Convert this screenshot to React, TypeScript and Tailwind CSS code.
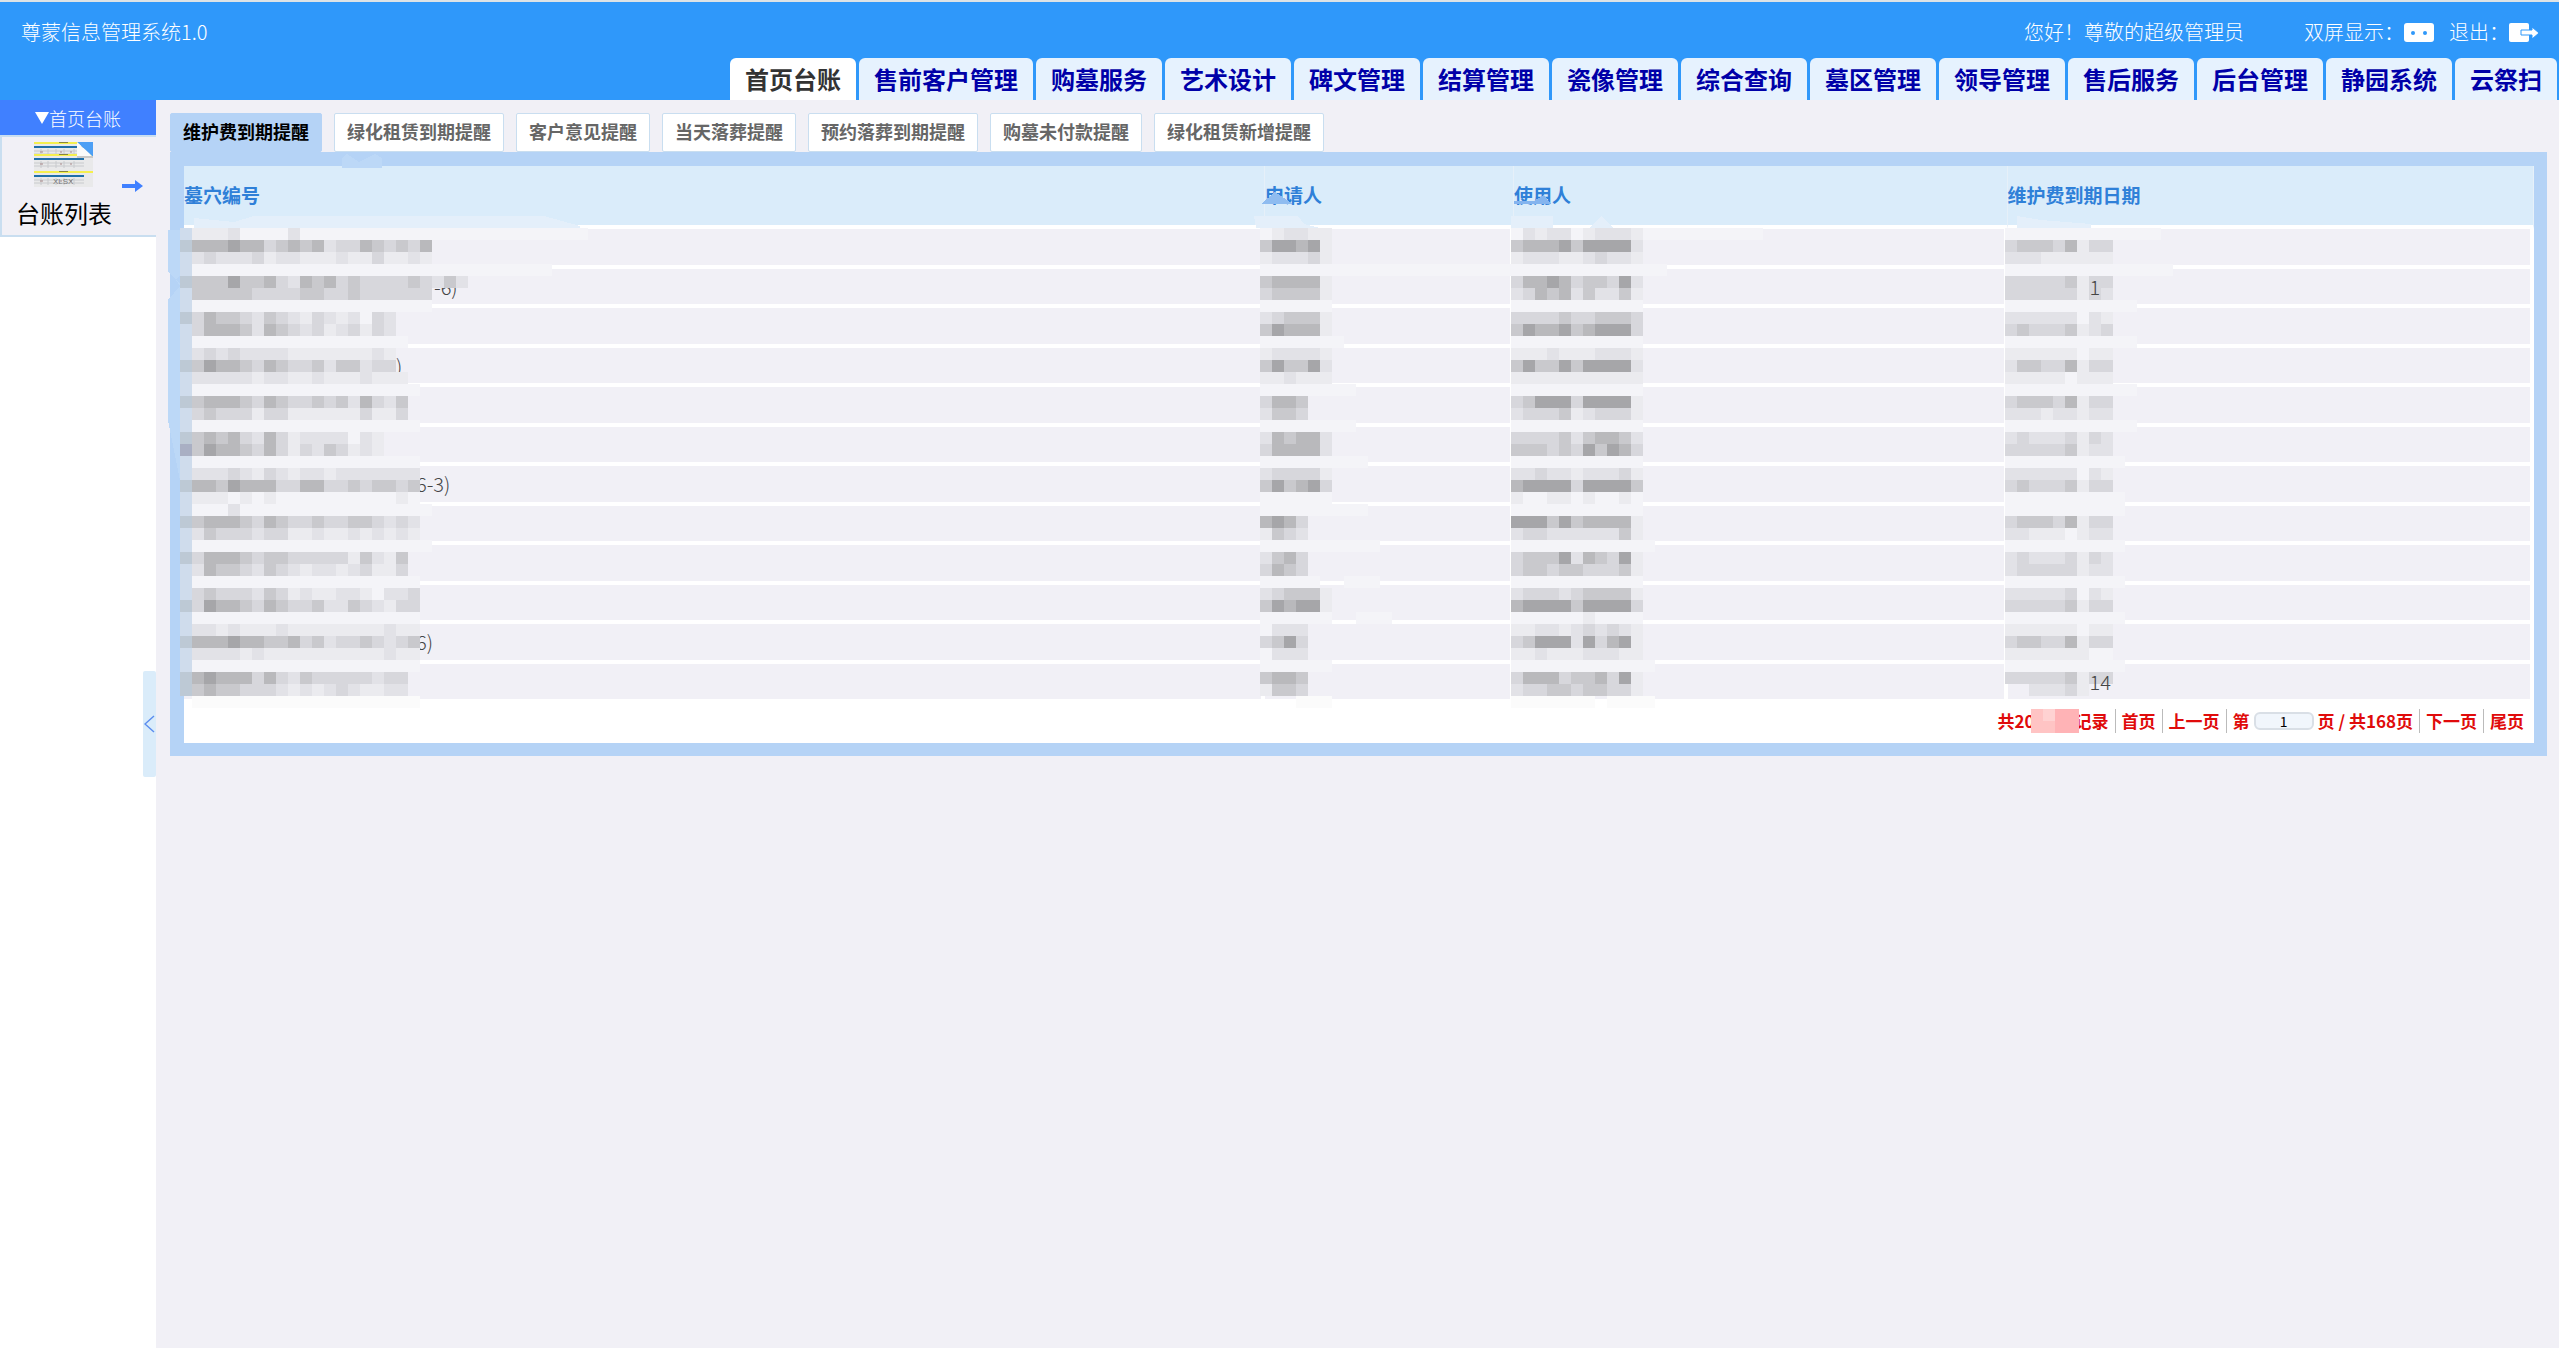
import type { ReactNode } from "react";

const navItems = [
  "首页台账", "售前客户管理", "购墓服务", "艺术设计", "碑文管理", "结算管理", "瓷像管理",
  "综合查询", "墓区管理", "领导管理", "售后服务", "后台管理", "静园系统", "云祭扫",
];

const reminderTabs = [
  "维护费到期提醒", "绿化租赁到期提醒", "客户意见提醒", "当天落葬提醒",
  "预约落葬到期提醒", "购墓未付款提醒", "绿化租赁新增提醒",
];

const columns = ["墓穴编号", "申请人", "使用人", "维护费到期日期"];

// what is left readable of each masked record
const rows = [
  { code: "", codePad: "", date: "", datePad: "" },
  { code: "-6)", codePad: "pl-[250px]", date: "1", datePad: "pl-[82px]" },
  { code: "", codePad: "", date: "", datePad: "" },
  { code: ")", codePad: "pl-[212px]", date: "", datePad: "" },
  { code: "", codePad: "", date: "", datePad: "" },
  { code: "", codePad: "", date: "", datePad: "" },
  { code: "6-3)", codePad: "pl-[232px]", date: "", datePad: "" },
  { code: "", codePad: "", date: "", datePad: "" },
  { code: "", codePad: "", date: "", datePad: "" },
  { code: "", codePad: "", date: "", datePad: "" },
  { code: "6)", codePad: "pl-[232px]", date: "", datePad: "" },
  { code: "", codePad: "", date: "14", datePad: "pl-[82px]" },
];

const shades: Record<string, string> = {
  p: "#f4f4f8",
  w: "#fbfbfb",
  "1": "#ebebef",
  "2": "#e2e2e7",
  "3": "#d7d7dc",
  "4": "#c9c9cd",
  "5": "#b9b9bc",
  "6": "#a6a6a9",
  b: "#cfdcec",
  c: "#bdc9d5",
  d: "#a9afc3",
  x: "#ffc4c4",
  y: "#ffd2d2",
  z: "#ffb3b6",
};

// one string per 12px line, one character per 12px cell
const codeMask = [
  "b1112pppp2pppppppppppppppppppppppp",
  "c55565534545233543435",
  "b23222312211121131121",
  "bpppppppppppppppppppppppppppppp",
  "c44464453254534333343242",
  "b44444333344334333333",
  "bpppppppppppppppppppp",
  "c35443243213212p32",
  "b35554254323123132",
  "bpppppppppppppppppp",
  "b23232222111111121",
  "c46554354334244233",
  "b222221221121112111",
  "bppppppppppppppppppp",
  "c455543543343425324",
  "b343331331111113113",
  "bppppppppppppppppppp",
  "c4545325312222p21",
  "d4655435313243121",
  "bppppppppppppppppppp",
  "b2223213212212222222",
  "c5546555335533434434",
  "b111p1p1pppppppppp1p",
  "bppp2pppppppppppppppp",
  "c4555435433433443232",
  "b2433323311211212121",
  "bpppppppppppppppppppp",
  "c355543443333314214",
  "b254432432122123113",
  "bppppppppppppppppppp",
  "b343332431211221p223",
  "c3655435433422432133",
  "bppppppppppppppppppp",
  "b2212111211111111211",
  "c5556554453423343234",
  "b2222121111111111211",
  "bppppppppppppppppppp",
  "c565553532433333233",
  "c454433321212321122",
  " wwwwwwwwwwwwwwwwwww",
];

const applicantMask = [
  "p12211", "466561", "122231", "ppppppppppppppppppppp", "455551", "344441", "pppppp",
  "234441", "465551", "ppppppp", "122221", "464462", "112111", "pppppppp", "3554", "2443",
  "pppppppp", "254552", "355552", "ppppppppp", "233331", "464563", "pppppp", "ppppppppp",
  "5653", "1432", "pppppppppp", "2453", "3543", "ppppp  ppp", "234441", "465661", "pppppp  ppp",
  "p222", "3463", "p222", "pppppp", "4554", "1443", "   www",
];

const userMask = [
  "p2122p12221pppppppppp", "45556466662", "12221123221", "ppppppppppppp", "35565344362", "23545242241",
  "ppppppppppp", "33334334443", "46556456663", "ppppppppppp", "11121112221", "46446466662",
  "11111111111", "ppppppppppp", "34666366661", "23334123331", "ppppppppppp", "33334245542",
  "44434364653", "ppppppppppp", "22322122231", "56666366664", "1pp11p1pp1p", "ppppppppppp",
  "66646455551", "23322222241", "pppppppppppp", "34446254361", "34434433341", "ppppppppppp",
  "23332344441", "56666466663", "pppppp1pppp", "11221232321", "34666263561", "11211122211",
  "pppppppppppp", "35553445361", "23344344331", "wwwwwww wwww",
];

const dateMask = [
  "ppppppppppppp", "344435133", "222111111", "pppppppppppppp", "333334133", "333333132", "ppppppppppp",
  "222222p21", "343334123", "ppppppppppp", "111111p11", "244335133", "11111p111", "ppppppppppp",
  "344435133", "222122122", "ppppppppppp", "232223132", "333334122", "pppppppppp", "222222p21",
  "343334133", "pppppppppp", "pppppppppp", "344435133", "22111p122", "pppppppppp", "232223132",
  "233333122", "pppppppppp", "222223p21", "333334133", "pppppppppp", "111111p11", "344335133",
  "1111111pp", "pppppppppp", "333334133", "  22231",
];

function Mosaic({ lines, className, children }: { lines: string[]; className: string; children?: ReactNode }) {
  const cells = Math.max(...lines.map((line) => line.length));
  return (
    <svg
      className={className}
      width={cells * 12}
      height={lines.length * 12}
      shapeRendering="crispEdges"
      aria-hidden="true"
    >
      {children}
      {lines.map((line, y) =>
        [...line].map((cell, x) =>
          shades[cell] ? (
            <rect key={`${x}-${y}`} x={x * 12} y={y * 12} width="12" height="12" fill={shades[cell]} />
          ) : null
        )
      )}
    </svg>
  );
}

function SheetIcon() {
  return (
    <svg width="59" height="45" viewBox="0 0 59 45" aria-hidden="true">
      <rect width="59" height="45" fill="#e9e9ea" />
      {[1, 13, 30].map((y) => (
        <g key={y}>
          <rect y={y - 1} width="59" height="2" fill="#f5ef4e" />
          <rect x="25" y={y - 1} width="9" height="1" fill="#8a8738" />
          <rect y={y + 3} width="50" height="2" fill="#1f6fa8" />
          <path d={`M0 ${y + 8}H50M0 ${y + 11}H50M7 ${y + 6}v7M14 ${y + 6}v7M22 ${y + 6}v7M30 ${y + 6}v7M40 ${y + 6}v7`} stroke="#c8cacd" strokeWidth="1" />
          <path d={`M6 ${y + 9}h3M26 ${y + 9}h2M36 ${y + 9}h2`} stroke="#a98888" strokeWidth="1" />
        </g>
      ))}
      <path d="M43 0h16v15z" fill="#4d9ff5" />
      <path d="M43 0v15h16z" fill="#fafafa" />
      <path d="M43 15h16" stroke="#c9c9c9" strokeWidth="2" />
      <text x="19" y="42" fontSize="8" fill="#777" fontFamily="Liberation Sans, sans-serif">XLSX</text>
    </svg>
  );
}

function Header() {
  return (
    <header className="flex h-[100px] flex-col justify-between border-t-2 border-[#dde3e6] bg-[#2f98fa] text-white">
      <div className="flex items-center justify-between pt-[14px] pr-5 pl-[21px] text-xl leading-8 font-light">
        <h1>尊蒙信息管理系统1.0</h1>
        <div className="flex items-center">
          <span className="mr-[60px]">您好！尊敬的超级管理员</span>
          <button type="button" className="mr-[15px] flex items-center" aria-label="双屏显示">
            <span>双屏显示：</span>
            <svg width="30" height="19" viewBox="0 0 30 19" aria-hidden="true">
              <rect width="30" height="19" rx="3" fill="#fff" />
              <circle cx="9" cy="10" r="2" fill="#2f98fa" />
              <circle cx="21" cy="10" r="2" fill="#2f98fa" />
            </svg>
          </button>
          <button type="button" className="flex items-center" aria-label="退出">
            <span>退出：</span>
            <svg width="30" height="19" viewBox="0 0 30 19" aria-hidden="true">
              <rect width="20" height="19" rx="2" fill="#fff" />
              <path d="M12 7h11V4l7 6-7 6v-4H12z" fill="#fff" stroke="#2f98fa" strokeWidth="1" />
            </svg>
          </button>
        </div>
      </div>
      <nav className="flex justify-end gap-[3px] pr-[2px] text-2xl font-semibold">
        {navItems.map((item, i) => (
          <a
            key={item}
            href="#"
            className={`flex h-[42px] items-center rounded-t-md px-[15px] pb-px whitespace-nowrap ${i === 0 ? "bg-white text-[#333]" : "bg-[#e6f2fe] text-[#0000a8]"}`}
          >
            {item}
          </a>
        ))}
      </nav>
    </header>
  );
}

function Sidebar() {
  return (
    <aside className="relative w-[156px] shrink-0 bg-white">
      <button type="button" className="flex h-[35px] w-full items-center justify-center bg-[#4080ff] text-lg font-light text-white">
        <svg width="14" height="12" viewBox="0 0 14 12" aria-hidden="true">
          <path d="M0 0h14L7 12z" fill="#fff" />
        </svg>
        首页台账
      </button>
      <a href="#" className="flex h-[102px] items-center justify-between border-y-2 border-l-2 border-[#c9def0] bg-[#f1f0f6] pr-[13px] pl-[14px] text-2xl leading-9 text-black">
        <span>
          <span className="block pb-2 pl-[18px]"><SheetIcon /></span>
          <span className="block">台账列表</span>
        </span>
        <svg width="21" height="12" viewBox="0 0 21 12" aria-hidden="true">
          <path d="M0 4h13V0l8 6-8 6V8H0z" fill="#4080ff" />
        </svg>
      </a>
      <button type="button" aria-label="收起" className="absolute top-1/2 right-0 flex h-[106px] w-[13px] -translate-y-1/2 items-center justify-center rounded-xs bg-[#daecfa]">
        <svg width="11" height="18" viewBox="0 0 11 18" fill="none" stroke="#5b8def" strokeWidth="1.5" aria-hidden="true">
          <path d="M10 1L1 9l9 8" />
        </svg>
      </button>
    </aside>
  );
}

function LedgerTable() {
  return (
    <table className="w-full table-fixed border-separate border-spacing-0 text-left text-xl leading-none">
      <colgroup>
        <col className="w-[46%]" />
        <col className="w-[10.6%]" />
        <col className="w-[21%]" />
        <col />
      </colgroup>
      <thead>
        <tr>
          {columns.map((name) => (
            <th key={name} className="h-[63px] border-r border-b-4 border-r-[#e6f0f9] border-b-white bg-[#daecfa] p-0 pb-[3px] text-[19px] font-semibold text-[#2f80d8]">
              {name}
            </th>
          ))}
        </tr>
      </thead>
      <tbody className="font-light text-[#444]">
        {rows.map((row, i) => (
          <tr key={i} className="h-10 bg-[#f1f0f6] even:h-[39px]">
            <td className="relative border-r-4 border-b-4 border-white p-0">
              <span className={row.codePad}>{row.code}</span>
              {i === 0 && (
                <Mosaic lines={codeMask} className="absolute -top-px -left-1 z-10 overflow-visible">
                  <path d="M-12 2H4v40l-8 10 4 6-12 14v120l12 60h4V60L-12 44z" fill="#bcd8f7" />
                  <path d="M162-60v-10l5-4 12 8 16-8 7 4v10z" fill="#bcd8f7" />
                  <path d="M14-10l40 4 20-6h290l36 10v4H14z" fill="#e4effa" />
                </Mosaic>
              )}
            </td>
            <td className="relative border-r-4 border-b-4 border-white p-0">
              {i === 0 && (
                <Mosaic lines={applicantMask} className="absolute -top-px -left-[5px] z-10 overflow-visible">
                  <path d="M1-24l14-12 18 12z" fill="#8fbcf0" />
                  <path d="M-6-12h44l6 8 16 4H-4z" fill="#e4effa" />
                </Mosaic>
              )}
            </td>
            <td className="relative border-r-4 border-b-4 border-white p-0">
              {i === 0 && (
                <Mosaic lines={userMask} className="absolute -top-px -left-[3px] z-10 overflow-visible">
                  <path d="M3-24v-3h20l10-6 7 9z" fill="#84b4ee" />
                  <path d="M0-12h42V0H0zM78 0l12-12L102 0z" fill="#e4effa" />
                </Mosaic>
              )}
            </td>
            <td className="relative border-r-4 border-b-4 border-white p-0">
              <span className={`relative z-20 ${row.datePad}`}>{row.date}</span>
              {i === 0 && (
                <Mosaic lines={dateMask} className="absolute -top-px -left-[3px] z-10 overflow-visible">
                  <path d="M12-12l24 4 50 4v4H12z" fill="#e4effa" />
                </Mosaic>
              )}
            </td>
          </tr>
        ))}
      </tbody>
    </table>
  );
}

function Pagination() {
  const link = "border-l border-[#bbb] px-[6px]";
  return (
    <div className="flex h-10 items-center justify-end bg-white pr-1 pb-1 text-[17px] leading-6 font-semibold whitespace-nowrap text-[#e00b0b]">
      <span className="flex pr-[6px]">
        共20
        <Mosaic lines={["xyzz", "xxzz"]} className="relative -mx-1" />
        记录
      </span>
      <a href="#" className={link}>首页</a>
      <a href="#" className={link}>上一页</a>
      <label className="flex items-center gap-1 border-l border-[#bbb] px-[6px]">
        第
        <input
          type="text"
          defaultValue="1"
          className="h-[18px] w-[60px] rounded-md border-2 border-[#d9dfe6] bg-[#f1f6fc] text-center text-sm leading-none font-normal text-black"
        />
        页 / 共168页
      </label>
      <a href="#" className={link}>下一页</a>
      <a href="#" className={link}>尾页</a>
    </div>
  );
}

export default function App() {
  return (
    <div className="flex min-h-screen flex-col bg-[#f1f0f6] font-['Noto_Sans_CJK_SC',sans-serif]">
      <Header />
      <div className="flex grow">
        <Sidebar />
        <main className="min-w-0 grow pt-[13px] pr-3 pl-[14px]">
          <div className="flex gap-3 text-lg font-semibold">
            {reminderTabs.map((tab, i) => (
              <button
                key={tab}
                type="button"
                className={`h-[39px] rounded-xs border px-3 pb-[3px] whitespace-nowrap ${i === 0 ? "border-[#b5d3f6] bg-[#b5d3f6] text-black" : "border-[#c9def0] bg-white text-[#666]"}`}
              >
                {tab}
              </button>
            ))}
          </div>
          <section className="bg-[#b5d3f6] pt-[14px] pr-[13px] pb-[13px] pl-[14px]">
            <LedgerTable />
            <Pagination />
          </section>
        </main>
      </div>
    </div>
  );
}
